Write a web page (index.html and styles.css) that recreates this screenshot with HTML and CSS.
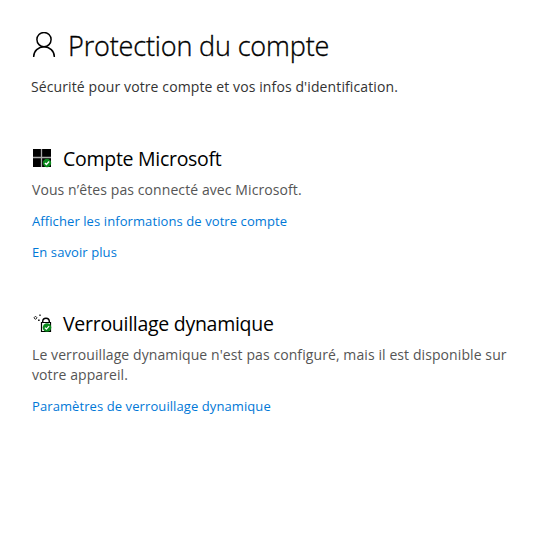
FILE: index.html
```html
<!DOCTYPE html>
<html lang="fr">
<head>
    <meta charset="UTF-8">
    <meta name="viewport" content="width=device-width, initial-scale=1.0">
    <title>Protection du compte</title>
    <link rel="stylesheet" href="styles.css">
</head>
<body>
    <main class="page">
        <header class="page-header">
            <svg width="24" height="28" viewBox="0 0 24 28" fill="none" stroke="#000" stroke-width="1.5">
                <circle cx="12" cy="7.600" r="7.100"/>
                <path d="M1.700 25v-.5a10.300 9.700 0 0 1 20.600 0v.5"/>
            </svg>
            <h1>Protection du compte</h1>
        </header>
        <p class="intro">Sécurité pour votre compte et vos infos d'identification.</p>

        <section class="section">
            <div class="section-title">
                <svg width="20" height="20" viewBox="0 0 20 20">
                    <path fill="#000" d="M1 0h18v18H1z"/>
                    <path d="M9.500 0v18M1 8.500h18" stroke="#aaa" stroke-width="1.300"/>
                    <circle cx="15" cy="14" r="4.200" fill="#0b8a1c"/>
                    <path d="M12.900 14l1.500 1.500 2.700-3" fill="none" stroke="#fff" stroke-width="1.300"/>
                </svg>
                <h2>Compte Microsoft</h2>
            </div>
            <p class="text">Vous n’êtes pas connecté avec Microsoft.</p>
            <a class="link" href="#">Afficher les informations de votre compte</a>
            <a class="link" href="#">En savoir plus</a>
        </section>

        <section class="section">
            <div class="section-title">
                <svg width="20" height="20" viewBox="0 0 20 20">
                    <path d="M3.500 2.200l1.500 1.600-1.500 1.600-1.500-1.600z" fill="none" stroke="#222"/>
                    <path d="M7.300 .5h1.400v1.500H7.300zM6 5.500h1.700v1.600H6z" fill="#222"/>
                    <path d="M10.700 9V7.500a3.300 3.200 0 0 1 6.600 0V9" fill="none" stroke="#000" stroke-width="1.400"/>
                    <path d="M9.500 8.500h9v9h-9z" fill="#fff" stroke="#000" stroke-width="1.200"/>
                    <circle cx="15" cy="13.500" r="4.300" fill="#0b8a1c"/>
                    <path d="M12.900 13.600l1.500 1.500 2.700-3" fill="none" stroke="#fff" stroke-width="1.300"/>
                </svg>
                <h2>Verrouillage dynamique</h2>
            </div>
            <p class="text">Le verrouillage dynamique n'est pas configuré, mais il est disponible sur votre appareil.</p>
            <a class="link" href="#">Paramètres de verrouillage dynamique</a>
        </section>
    </main>
</body>
</html>
```
FILE: styles.css
```css
body {
    margin: 0;
    background-color: #fff;
    color: #000;
    font-family: 'Segoe UI', 'Open Sans', 'Noto Sans', sans-serif;
}
.page {
    padding: 28px 24px 0 32px;
}
.page-header {
    display: flex;
    align-items: center;
    gap: 12px;
    height: 36px;
}
h1, h2, p {
    margin: 0;
    font-weight: 400;
}
h1 {
    font-size: 27px;
    font-weight: 300;
    line-height: 36px;
    letter-spacing: -0.15px;
    -webkit-text-stroke: 0.35px #000;
}
.intro {
    margin-top: 13px;
    margin-left: -1px;
    font-size: 14px;
    line-height: 20px;
    letter-spacing: 0.11px;
    color: #333;
}
.section {
    margin-top: 48px;
}
.section-title {
    display: flex;
    align-items: center;
    gap: 11px;
    height: 28px;
}
h2 {
    font-size: 19.5px;
    line-height: 28px;
    letter-spacing: -0.28px;
}
.text {
    margin-top: 7px;
    font-size: 14px;
    line-height: 20px;
    letter-spacing: 0.09px;
    color: #555;
}
.link {
    display: block;
    margin-top: 11px;
    font-size: 13px;
    line-height: 20px;
    letter-spacing: 0.09px;
    color: #0078d7;
    text-decoration: none;
}
```
